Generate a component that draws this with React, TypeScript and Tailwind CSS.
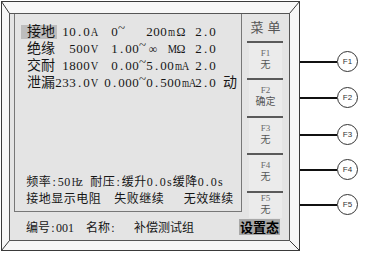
import React from "react";

const isWide = (ch: string) => /[\u2E80-\u9FFF\uFF00-\uFFEF]/.test(ch);
const isSym = (ch: string) => ch === "Ω" || ch === "∞";

function squeeze(ch: string) {
  if (ch === "m") return " scale-x-[0.7]";
  if (/[A-Z]/.test(ch)) return " scale-x-[0.8]";
  if (ch === "~") return " -translate-y-[4px]";
  return "";
}

function Cells({ text, n, w }: { text: string; n: string; w: string }) {
  return (
    <>
      {Array.from(text).map((ch, i) => (
        <span
          key={i}
          className={
            "inline-block text-center whitespace-pre leading-none " +
            (isSym(ch) ? "w-[14px] text-[12px]" : isWide(ch) ? w : n) +
            squeeze(ch)
          }
        >
          {ch}
        </span>
      ))}
    </>
  );
}

const N = "w-[7px] text-[13px]";
const W = "w-[14px] text-[14px]";
const NS = "w-[6.5px] text-[12px]";
const WS = "w-[12.5px] text-[12px]";
const N7 = "w-[6px] text-[12px]";
const W7 = "w-[12px] text-[12px]";

function MainRow({ text }: { text: string }) {
  return (
    <div className="flex items-center h-[17px] pl-[12px]">
      <Cells text={text} n={N} w={W} />
    </div>
  );
}

function MenuItem({ h, label, sub }: { h: string; label: string; sub: string }) {
  return (
    <div className={"ml-[7px] w-[33px] bg-[#ebebeb] flex flex-col items-center justify-center pb-[3px] " + h}>
      <span className="text-[9px] leading-[11px] text-[#6a6a6a]">{label}</span>
      <span className="text-[10px] leading-[12px] text-[#555]">{sub}</span>
    </div>
  );
}

function Sep() {
  return <div className="ml-[5px] w-[36px] h-[2px] bg-[#5a5a5a]" />;
}

function Callout({ label, mt }: { label: string; mt: string }) {
  return (
    <div className={"flex items-center " + mt}>
      <div className="w-[37px] h-[2px] bg-[#111]" />
      <div className="w-[21px] h-[21px] rounded-full border-[1.5px] border-[#333] bg-white flex items-center justify-center text-[8px] text-[#333] font-['Liberation_Sans',sans-serif]">
        {label}
      </div>
    </div>
  );
}

export default function App() {
  return (
    <div className="w-[368px] h-[256px] bg-white flex items-start text-[#161616] font-['Liberation_Serif','Noto_Sans_CJK_SC',serif]">
      <div className="relative mt-[1px] ml-[1px] w-[299px] h-[250px] border border-[#3a3a3a] bg-[#f7f7f7] pl-[7px] pt-[11px] pr-[9px] pb-[9px]">
        <svg className="absolute inset-0 overflow-visible" width="297" height="248">
          <line x1="-0.5" y1="-0.5" x2="7.5" y2="11.5" stroke="#3a3a3a" strokeWidth="1" />
          <line x1="297.5" y1="-0.5" x2="287.5" y2="11.5" stroke="#3a3a3a" strokeWidth="1" />
          <line x1="-0.5" y1="248.5" x2="7.5" y2="238.5" stroke="#3a3a3a" strokeWidth="1" />
          <line x1="297.5" y1="248.5" x2="287.5" y2="238.5" stroke="#3a3a3a" strokeWidth="1" />
        </svg>
        <div className="relative flex h-full border border-[#555] bg-[#e4e4e4]">
          {/* left column */}
          <div className="w-[232px] flex flex-col">
            <div className="ml-[4px] w-[228px] h-[198px] border-l border-r border-b border-[#777] flex flex-col justify-between pt-[9px] pb-[4px]">
              <div className="flex flex-col">
                <div className="flex items-center h-[17px] pl-[12px]">
                  <span className="flex items-center h-[14px] bg-[#bdbdbd] -ml-[6px] pl-[6px] pr-[2px] -mr-[2px]">
                    <Cells text="接地" n={N} w={W} />
                  </span>
                  <Cells text=" 10.0A  0~   200mΩ 2.0" n={N} w={W} />
                </div>
                <MainRow text="绝缘  500V  1.00~∞ MΩ 2.0" />
                <MainRow text="交耐 1800V  0.00~5.00mA 2.0" />
                <MainRow text="泄漏233.0V 0.000~0.500mA2.0 动" />
              </div>
              <div className="flex flex-col">
                <div className="flex items-center h-[17px] pl-[11px]">
                  <Cells text="频率:50Hz 耐压:缓升0.0s缓降0.0s" n={NS} w={WS} />
                </div>
                <div className="flex items-center h-[17px] pl-[11px]">
                  <Cells text="接地显示电阻  失败继续   无效继续" n={NS} w={WS} />
                </div>
              </div>
            </div>
            <div className="flex-1 flex items-center pl-[16px] pt-[4px]">
              <Cells text="编号:001  名称:   补偿测试组" n={N7} w={W7} />
            </div>
          </div>
          {/* menu column */}
          <div className="flex-1 flex flex-col">
            <div className="h-[27px] flex items-center justify-center pl-[4px] text-[13px] tracking-[4px] text-[#555]">
              菜单
            </div>
            <Sep />
            <MenuItem h="h-[35px]" label="F1" sub="无" />
            <Sep />
            <MenuItem h="h-[36px]" label="F2" sub="确定" />
            <Sep />
            <MenuItem h="h-[35px]" label="F3" sub="无" />
            <Sep />
            <MenuItem h="h-[36px]" label="F4" sub="无" />
            <Sep />
            <MenuItem h="h-[25px]" label="F5" sub="无" />
            <div className="mt-[1px] -ml-[3px] w-[41px] h-[16px] bg-[#a8a8a8] flex items-center justify-center text-[13px] font-bold text-black leading-none">
              设置态
            </div>
          </div>
        </div>
      </div>
      <div className="flex flex-col">
        <Callout label="F1" mt="mt-[51px]" />
        <Callout label="F2" mt="mt-[15px]" />
        <Callout label="F3" mt="mt-[16px]" />
        <Callout label="F4" mt="mt-[14px]" />
        <Callout label="F5" mt="mt-[14px]" />
      </div>
    </div>
  );
}
